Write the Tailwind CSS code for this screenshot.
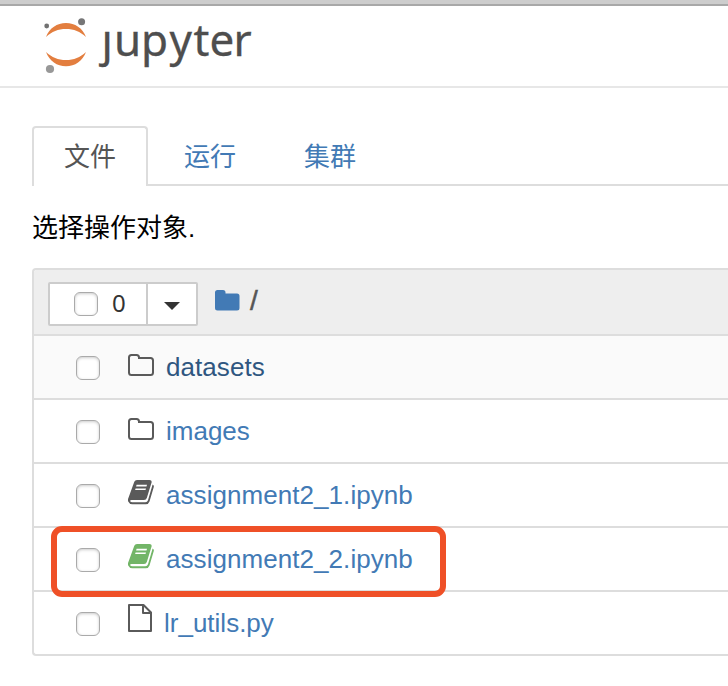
<!DOCTYPE html>
<html lang="zh-CN">
<head>
<meta charset="utf-8">
<title>Jupyter</title>
<script src="https://cdn.jsdelivr.net/npm/@tailwindcss/browser@4"></script>
</head>
<body class="bg-white w-[728px] h-[686px] overflow-hidden font-['Liberation_Sans','Noto_Sans_CJK_SC',sans-serif] text-[26px] leading-[36px] text-black">
<svg class="hidden">
  <symbol id="folder" viewBox="0 0 26 22"><path d="M1 3.500Q1 1 3.500 1H8.500Q11 1 11 3.500V4H22.500Q25 4 25 6.500V18.500Q25 21 22.500 21H3.500Q1 21 1 18.500Z" fill="none" stroke="currentColor" stroke-width="2"/></symbol>
  <symbol id="book" viewBox="0 0 26 25"><path fill="currentColor" fill-rule="evenodd" d="M6.300 1.700Q7 0 9 0H21.500Q24.300 0 23.500 2.800L18.900 17.800Q18.200 20 16 20H3.600Q2.100 20 2.100 21Q2.500 22.300 4.500 22.300H17.300Q19.300 22.300 20 20.200L24.600 4.500Q26.300 5.500 25.700 7.300L21.500 21.500Q20.500 24.300 17.800 24.300H4.500Q1.300 24.300 .2 21.600Q-.3 19.800 .3 18.300ZM8.600 4.800L8.100 6.400H18.500L19 4.800ZM7.600 8.500L7.100 10.100H17.500L18 8.500Z"/></symbol>
  <symbol id="file" viewBox="0 0 24 28"><path d="M1 1H15.500L23 8.500V27H1ZM15 1V9H23" fill="none" stroke="currentColor" stroke-width="2" stroke-linejoin="round"/></symbol>
</svg>
<div class="h-[6px] bg-[#cdcdcd] border-b-2 border-[#a8a8a8]"></div>
<header class="h-[82px] border-b-2 border-[#e7e7e7]">
  <svg width="300" height="80" viewBox="0 6 300 80" role="img">
    <path d="M46 37C49.500 28 57 23 66 23S82.500 28 86 37C80 31.500 74 29 66 29S52 31.500 46 37Z" fill="#e37e3f"/>
    <path d="M46 52C49.500 61 57 66.300 66 66.300S82.500 61 86 52C80 57.500 74 60 66 60S52 57.500 46 52Z" fill="#e37e3f"/>
    <circle cx="46.700" cy="26" r="2.400" fill="#717171"/><circle cx="81.600" cy="21.700" r="3.500" fill="#767677"/><circle cx="50" cy="69" r="4.100" fill="#989898"/>
    <text x="101.500 114 141 169.500 193.500 209.500 233.500" y="56" font-family="Noto Sans, sans-serif" font-size="44" fill="#4e4e4e" stroke="#4e4e4e" stroke-width=".3">ȷupyter</text>
  </svg>
</header>
<main class="pt-[38px] pl-8">
  <nav class="flex h-[60px] leading-[59px]">
    <div class="w-[116px] border-2 border-b-0 border-[#ddd] rounded-t-[4px] pl-[30px] text-[#555]">文件</div>
    <div class="flex flex-1 border-b-2 border-[#ddd] text-[#427ab5]">
      <div class="w-[120px] pl-9 pt-[2px]">运行</div><div class="pl-9 pt-[2px]">集群</div>
    </div>
  </nav>
  <p class="mt-6 h-[58px]">选择操作对象.</p>
  <section class="border-2 border-r-0 border-[#ddd] rounded-l-[4px] overflow-hidden text-[#427ab5]">
    <div class="h-[66px] bg-[#eee] border-b-2 border-[#ddd] flex pl-[14px] pt-3">
      <div class="flex w-[150px] h-[44px] bg-white border-2 border-[#ccc] rounded-[2px] text-[#333]">
        <div class="w-[98px] border-r-2 border-[#ccc] flex items-center pl-6">
          <span class="size-6 rounded-[6px] border border-[#aaa] bg-white shadow-[inset_0_1px_3px_#ccc]"></span>
          <span class="ml-[14px] mb-[2px] text-[24px] font-['Noto_Sans']">0</span>
        </div>
        <div class="flex flex-1 items-center justify-center"><svg class="mt-1" width="16" height="8"><path d="M0 0H16L8 8Z" fill="#333"/></svg></div>
      </div>
      <svg class="ml-[17px] mt-[8px]" width="25" height="21" viewBox="0 0 25 21"><path d="M0 2.500Q0 0 2.500 0H8Q10.500 0 10.500 2.500V3.500H22Q24.500 3.500 24.500 6V18Q24.500 20.500 22 20.500H2.500Q0 20.500 0 18Z" fill="#427ab5"/></svg>
      <span class="ml-[10px] mt-px w-[10px] text-[#555] text-[28px] [-webkit-text-stroke:0.5px_#555]">/</span>
    </div>
    <div class="h-16 border-b-2 border-[#ddd] bg-[#fafafa] flex items-center pl-[42px]"><span class="size-6 mt-[2px] rounded-[6px] border border-[#aaa] bg-white shadow-[inset_0_1px_3px_#ccc]"></span><svg class="ml-7 mb-1 w-[26px] h-[22px] text-[#5a5a5a]"><use href="#folder"/></svg><span class="ml-3 tracking-[0.06px] text-[#2f5680]">datasets</span></div>
    <div class="h-16 border-b-2 border-[#ddd] flex items-center pl-[42px]"><span class="size-6 mt-[2px] rounded-[6px] border border-[#aaa] bg-white shadow-[inset_0_1px_3px_#ccc]"></span><svg class="ml-7 mb-1 w-[26px] h-[22px] text-[#5a5a5a]"><use href="#folder"/></svg><span class="ml-3">images</span></div>
    <div class="h-16 border-b-2 border-[#ddd] flex items-center pl-[42px]"><span class="size-6 mt-[2px] rounded-[6px] border border-[#aaa] bg-white shadow-[inset_0_1px_3px_#ccc]"></span><svg class="ml-7 mb-[5px] w-[26px] h-[25px] text-[#5a5a5a]"><use href="#book"/></svg><span class="ml-3 tracking-[0.06px]">assignment2_1.ipynb</span></div>
    <div class="h-16 border-b-2 border-[#ddd] flex items-center pl-[42px]"><span class="size-6 mt-[2px] rounded-[6px] border border-[#aaa] bg-white shadow-[inset_0_1px_3px_#ccc]"></span><svg class="ml-7 mb-[5px] w-[26px] h-[25px] text-[#72b567]"><use href="#book"/></svg><span class="ml-3 tracking-[0.06px]">assignment2_2.ipynb</span></div>
    <div class="h-[62px] flex items-center pl-[42px]"><span class="size-6 mt-[2px] rounded-[6px] border border-[#aaa] bg-white shadow-[inset_0_1px_3px_#ccc]"></span><svg class="ml-7 mb-[10px] w-6 h-7 text-[#5a5a5a]"><use href="#file"/></svg><span class="ml-3">lr_utils.py</span></div>
  </section>
</main>
<div class="absolute left-[51px] top-[526px] w-[395px] h-[71px] border-[6px] border-[#ef5027] rounded-[11px]"></div>
</body>
</html>
